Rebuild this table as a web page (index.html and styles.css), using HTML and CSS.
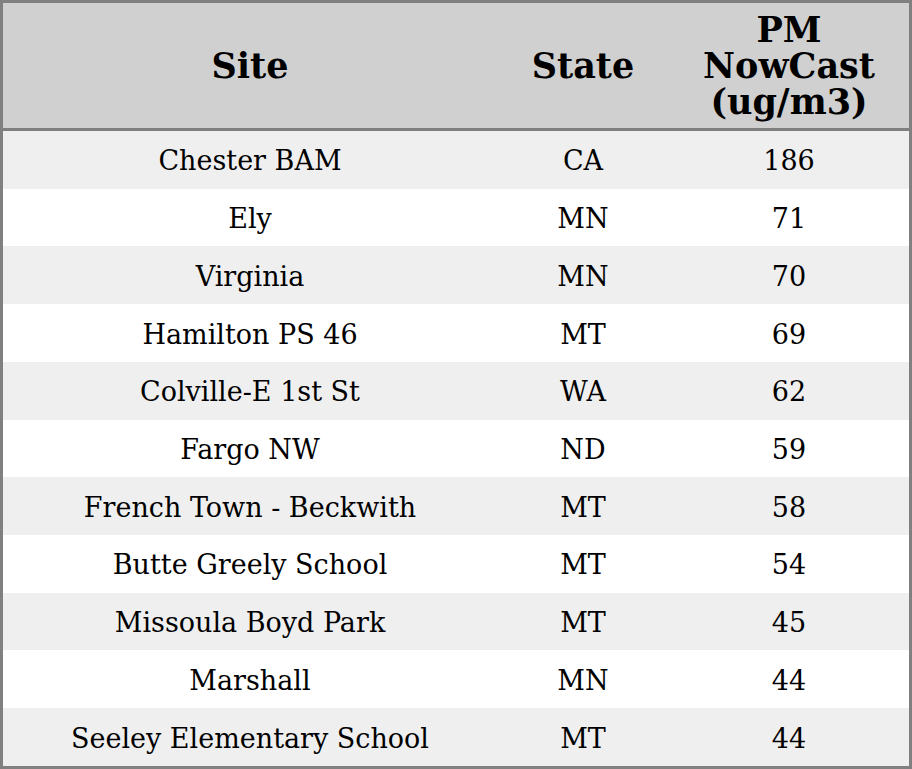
FILE: index.html
```html
<!DOCTYPE html>
<html>
<head>
<meta charset="utf-8">
<link rel="stylesheet" href="styles.css">
</head>
<body>
<table class="aq">
<colgroup><col class="c1"><col class="c2"><col class="c3"></colgroup>
<thead>
<tr><th>Site</th><th>State</th><th>PM<br>NowCast<br>(ug/m3)</th></tr>
</thead>
<tbody>
<tr><td>Chester BAM</td><td>CA</td><td>186</td></tr>
<tr><td>Ely</td><td>MN</td><td>71</td></tr>
<tr><td>Virginia</td><td>MN</td><td>70</td></tr>
<tr><td>Hamilton PS 46</td><td>MT</td><td>69</td></tr>
<tr><td>Colville-E 1st St</td><td>WA</td><td>62</td></tr>
<tr><td>Fargo NW</td><td>ND</td><td>59</td></tr>
<tr><td>French Town - Beckwith</td><td>MT</td><td>58</td></tr>
<tr><td>Butte Greely School</td><td>MT</td><td>54</td></tr>
<tr><td>Missoula Boyd Park</td><td>MT</td><td>45</td></tr>
<tr><td>Marshall</td><td>MN</td><td>44</td></tr>
<tr><td>Seeley Elementary School</td><td>MT</td><td>44</td></tr>
</tbody>
</table>
</body>
</html>
```
FILE: styles.css
```css
html, body {
  margin: 0;
  padding: 0;
  background: #ffffff;
}
.aq {
  width: 912px;
  height: 769px;
  border: 3px solid #808080;
  border-collapse: separate;
  border-spacing: 0;
  table-layout: fixed;
  font-family: "DejaVu Serif", serif;
  color: #000;
}
.c1 { width: 494px; }
.c2 { width: 172px; }
.c3 { width: 240px; }
.aq th {
  background: #d0d0d0;
  font-weight: bold;
  font-size: 35px;
  line-height: 36px;
  height: 128px;
  padding: 0;
  text-align: center;
  vertical-align: middle;
  border-bottom: 3px solid #808080;
  box-sizing: border-box;
}
.aq td {
  font-size: 27px;
  text-align: center;
  vertical-align: middle;
  padding: 2px 0 0;
  height: 55.7px;
}
.aq tbody tr:nth-child(odd) td {
  background: #efefef;
}
```
